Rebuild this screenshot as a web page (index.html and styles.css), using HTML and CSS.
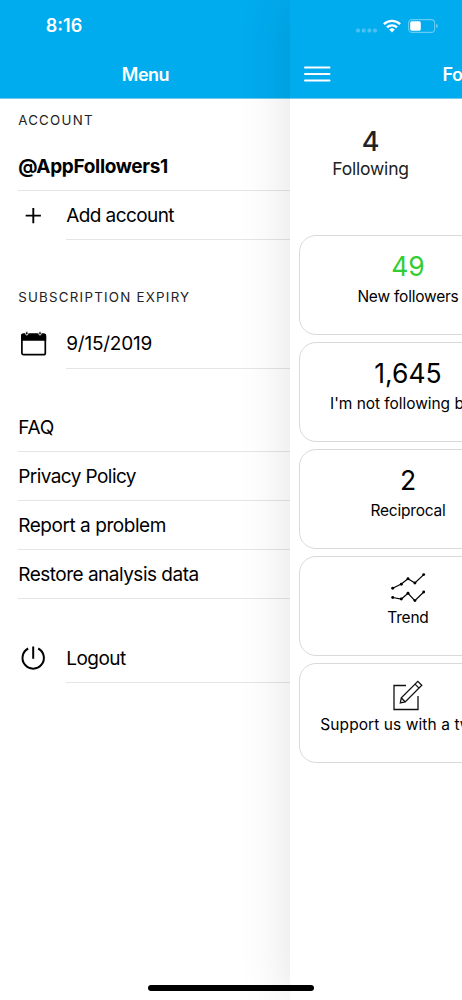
FILE: index.html
```html
<!DOCTYPE html>
<html lang="en">
<head>
<meta charset="utf-8">
<title>Menu</title>
<link rel="stylesheet" href="styles.css">
</head>
<body>
<div class="screen">
  <aside class="menu">
    <header class="bar">
      <div class="clock">8:16</div>
      <h1 class="bar-title">Menu</h1>
    </header>
    <h2 class="label label-account">ACCOUNT</h2>
    <div class="row row-user">@AppFollowers1</div>
    <div class="icon-row">
      <svg class="icon" viewBox="0 0 30 30"><path d="M15.300 7v15.200M7.700 14.600h15.200" fill="none" stroke="#000" stroke-width="1.900"/></svg>
      <div class="row w-add">Add account</div>
    </div>
    <h2 class="label label-expiry">SUBSCRIPTION EXPIRY</h2>
    <div class="icon-row">
      <svg class="icon" viewBox="0 0 30 30"><rect x="3.900" y="5.300" width="23.400" height="20.400" rx="1.800" fill="none" stroke="#000" stroke-width="1.700"/><path d="M3 11.700V6.500a2 2 0 0 1 2-2h21.200a2 2 0 0 1 2 2v5.200z"/><g fill="#000" stroke="#fff" stroke-width=".9"><rect x="7.600" y="2.600" width="2.400" height="3.400" rx="1.200"/><rect x="20.800" y="2.600" width="2.400" height="3.400" rx="1.200"/></g></svg>
      <div class="row w-date">9/15/2019</div>
    </div>
    <nav class="links">
      <div class="row w-faq">FAQ</div>
      <div class="row w-privacy">Privacy Policy</div>
      <div class="row w-report">Report a problem</div>
      <div class="row w-restore">Restore analysis data</div>
    </nav>
    <div class="icon-row">
      <svg class="icon" viewBox="0 0 30 30"><path d="M15.200 3.500v12.200M10.200 5.500a10.700 10.700 0 1 0 10 0" fill="none" stroke="#000" stroke-width="2"/></svg>
      <div class="row w-logout">Logout</div>
    </div>
  </aside>
  <main class="main">
    <header class="bar bar-main">
      <div class="status">
        <svg class="dots" viewBox="0 0 22 5" fill="#fff" fill-opacity=".28"><rect x="0" y=".5" width="4" height="4" rx="1.500"/><rect x="5.700" y=".5" width="4" height="4" rx="1.500"/><rect x="11.400" y=".5" width="4" height="4" rx="1.500"/><rect x="17" y=".5" width="4" height="4" rx="1.500"/></svg>
        <svg class="wifi" viewBox="0 0 18 14"><g fill="none" stroke="#fff" stroke-width="2.300"><path d="M.9 5.100a11.600 11.600 0 0 1 16.200 0"/><path d="M4 8.400a7.200 7.200 0 0 1 10 0"/></g><path d="M6.200 10.600a4.100 4.100 0 0 1 5.600 0L9 13.400z" fill="#fff"/></svg>
        <svg class="battery" viewBox="0 0 30 14"><rect x=".6" y=".6" width="26" height="12.800" rx="3.500" fill="none" stroke="#fff" stroke-opacity=".4" stroke-width="1.100"/><rect x="2.200" y="2.300" width="10.600" height="9.400" rx="1.600" fill="#fff"/><path d="M28.200 4.800c2 .8 2 3.600 0 4.400z" fill="#fff" fill-opacity=".45"/></svg>
      </div>
      <div class="nav">
        <svg class="burger" viewBox="0 0 28 18"><path d="M2 2.500h24.500M2 9h24.500M2 15.500h24.500" stroke="#fff" stroke-width="2" stroke-linecap="round"/></svg>
        <div class="nav-title">Followers</div>
      </div>
    </header>
    <section class="stat">
      <div class="stat-num">4</div>
      <div class="stat-name">Following</div>
    </section>
    <section class="cards">
      <div class="card"><div class="num green">49</div><div class="name">New followers</div></div>
      <div class="card"><div class="num">1,645</div><div class="name w-back">I'm not following back</div></div>
      <div class="card"><div class="num">2</div><div class="name">Reciprocal</div></div>
      <div class="card">
        <svg class="card-icon" viewBox="0 0 36 36"><g fill="none" stroke="#000" stroke-width="1.200"><path d="M2.700 18.200 11.300 14 18 8.800 24.900 13 33.700 4.600"/><path d="M2.700 27.500 11.300 29 18 23.300 24.900 30.600 33.700 22"/></g><g><circle cx="2.700" cy="18.200" r="1.450"/><circle cx="11.300" cy="14.200" r="1.450"/><circle cx="18" cy="8.800" r="1.450"/><circle cx="24.900" cy="13" r="1.450"/><circle cx="33.700" cy="4.600" r="1.450"/><circle cx="2.700" cy="27.500" r="1.450"/><circle cx="11.300" cy="29" r="1.450"/><circle cx="18" cy="23.300" r="1.450"/><circle cx="24.900" cy="30.600" r="1.450"/><circle cx="33.700" cy="22" r="1.450"/></g></svg>
        <div class="name">Trend</div>
      </div>
      <div class="card">
        <svg class="card-icon" viewBox="0 0 36 36"><g fill="none" stroke="#111" stroke-width="1.300"><path d="M16 8.500H4v24h24V19"/><path d="M10.300 26l1-5.200L27.800 4.300l4 4-16.600 16.700zM25 7.100l4 4M11.300 20.800l3.900 4.200"/></g></svg>
        <div class="name w-support">Support us with a tweet</div>
      </div>
    </section>
  </main>
  <div class="home"></div>
</div>
</body>
</html>
```
FILE: styles.css
```css
* { box-sizing: border-box; }
body { margin: 0; background: #fff; font-family: Inter, "Liberation Sans", sans-serif; color: #000; }
h1, h2 { margin: 0; }
svg { display: block; flex: none; }
.screen { position: relative; display: flex; width: 462px; height: 1000px; overflow: hidden; }
.menu { flex: 0 0 290px; height: 1000px; }
.bar { height: 99px; background: #00abee; border-bottom: 1px solid #72c9ec; color: #fff; }
.clock { width: 128px; padding-top: 15px; text-align: center; font-size: 18px; line-height: 22px; font-weight: 600; }
.bar-title { padding: 27px 0 0 1px; text-align: center; font-size: 18px; line-height: 22px; font-weight: 600; letter-spacing: -.5px; }
.label { padding-left: 18.200px; font-size: 13.300px; line-height: 20px; font-weight: 400; letter-spacing: 1.250px; color: #222; }
.label-account { padding-top: 11px; height: 43px; }
.row { height: 49.200px; border-bottom: 1px solid #e5e5e5; font-size: 19px; line-height: 49px; letter-spacing: -.5px; white-space: nowrap; }
.row-user { margin-left: 18.200px; font-weight: 700; letter-spacing: -.33px; }
.icon-row { display: flex; align-items: center; padding-left: 18px; }
.icon { width: 30px; height: 30px; }
.icon-row .row { flex: 1; margin-left: 18.200px; }
.icon-row .w-add { letter-spacing: -.58px; }
.icon-row .w-date { letter-spacing: -.22px; }
.w-faq { letter-spacing: -.25px; }
.w-privacy { letter-spacing: -.57px; }
.w-report { letter-spacing: -.45px; }
.w-logout { letter-spacing: -.5px; padding-top: 1px; }
.label-expiry { padding-top: 47px; height: 79px; }
.links { padding: 34px 0 34px 18.200px; }
.main { flex: 0 0 462px; height: 1000px; background: #fff; box-shadow: 0 0 50px rgba(0, 0, 0, .12); }
.bar-main { padding-top: 18px; }
.status { display: flex; align-items: center; padding-left: 66px; height: 15px; }
.dots { width: 22px; height: 5px; margin-top: 9px; }
.wifi { width: 18px; height: 14px; margin-left: 5px; }
.battery { width: 30px; height: 14px; margin-left: 7px; }
.nav { display: flex; align-items: center; padding: 30px 0 0 13px; }
.burger { width: 28px; height: 18px; }
.nav-title { margin-left: 111.500px; padding-top: 2px; height: 22px; margin-bottom: -1px; font-size: 18px; line-height: 20px; font-weight: 600; letter-spacing: -.4px; }
.stat { width: 161px; height: 135.500px; padding-top: 26px; text-align: center; color: #222; }
.stat-num { font-size: 27px; line-height: 34px; font-weight: 500; }
.stat-name { font-size: 17.500px; line-height: 20px; letter-spacing: -.2px; }
.cards { display: flex; flex-direction: column; gap: 7px; padding-left: 9px; }
.card { display: flex; flex-direction: column; align-items: center; width: 218px; height: 100px; border: 1px solid #d9d9d9; border-radius: 17px; }
.num { height: 51px; padding-top: 13.500px; font-size: 26.500px; line-height: 34px; }
.green { color: #32cd32; }
.name { font-size: 15.500px; line-height: 20px; letter-spacing: -.22px; white-space: nowrap; }
.w-back { padding-left: 4px; letter-spacing: -.05px; }
.w-support { letter-spacing: .08px; }
.card-icon { width: 36px; height: 36px; margin: 13px 0 2px; }
.home { position: absolute; left: 148px; bottom: 9px; width: 166px; height: 6px; border-radius: 3px; background: #000; }
```
